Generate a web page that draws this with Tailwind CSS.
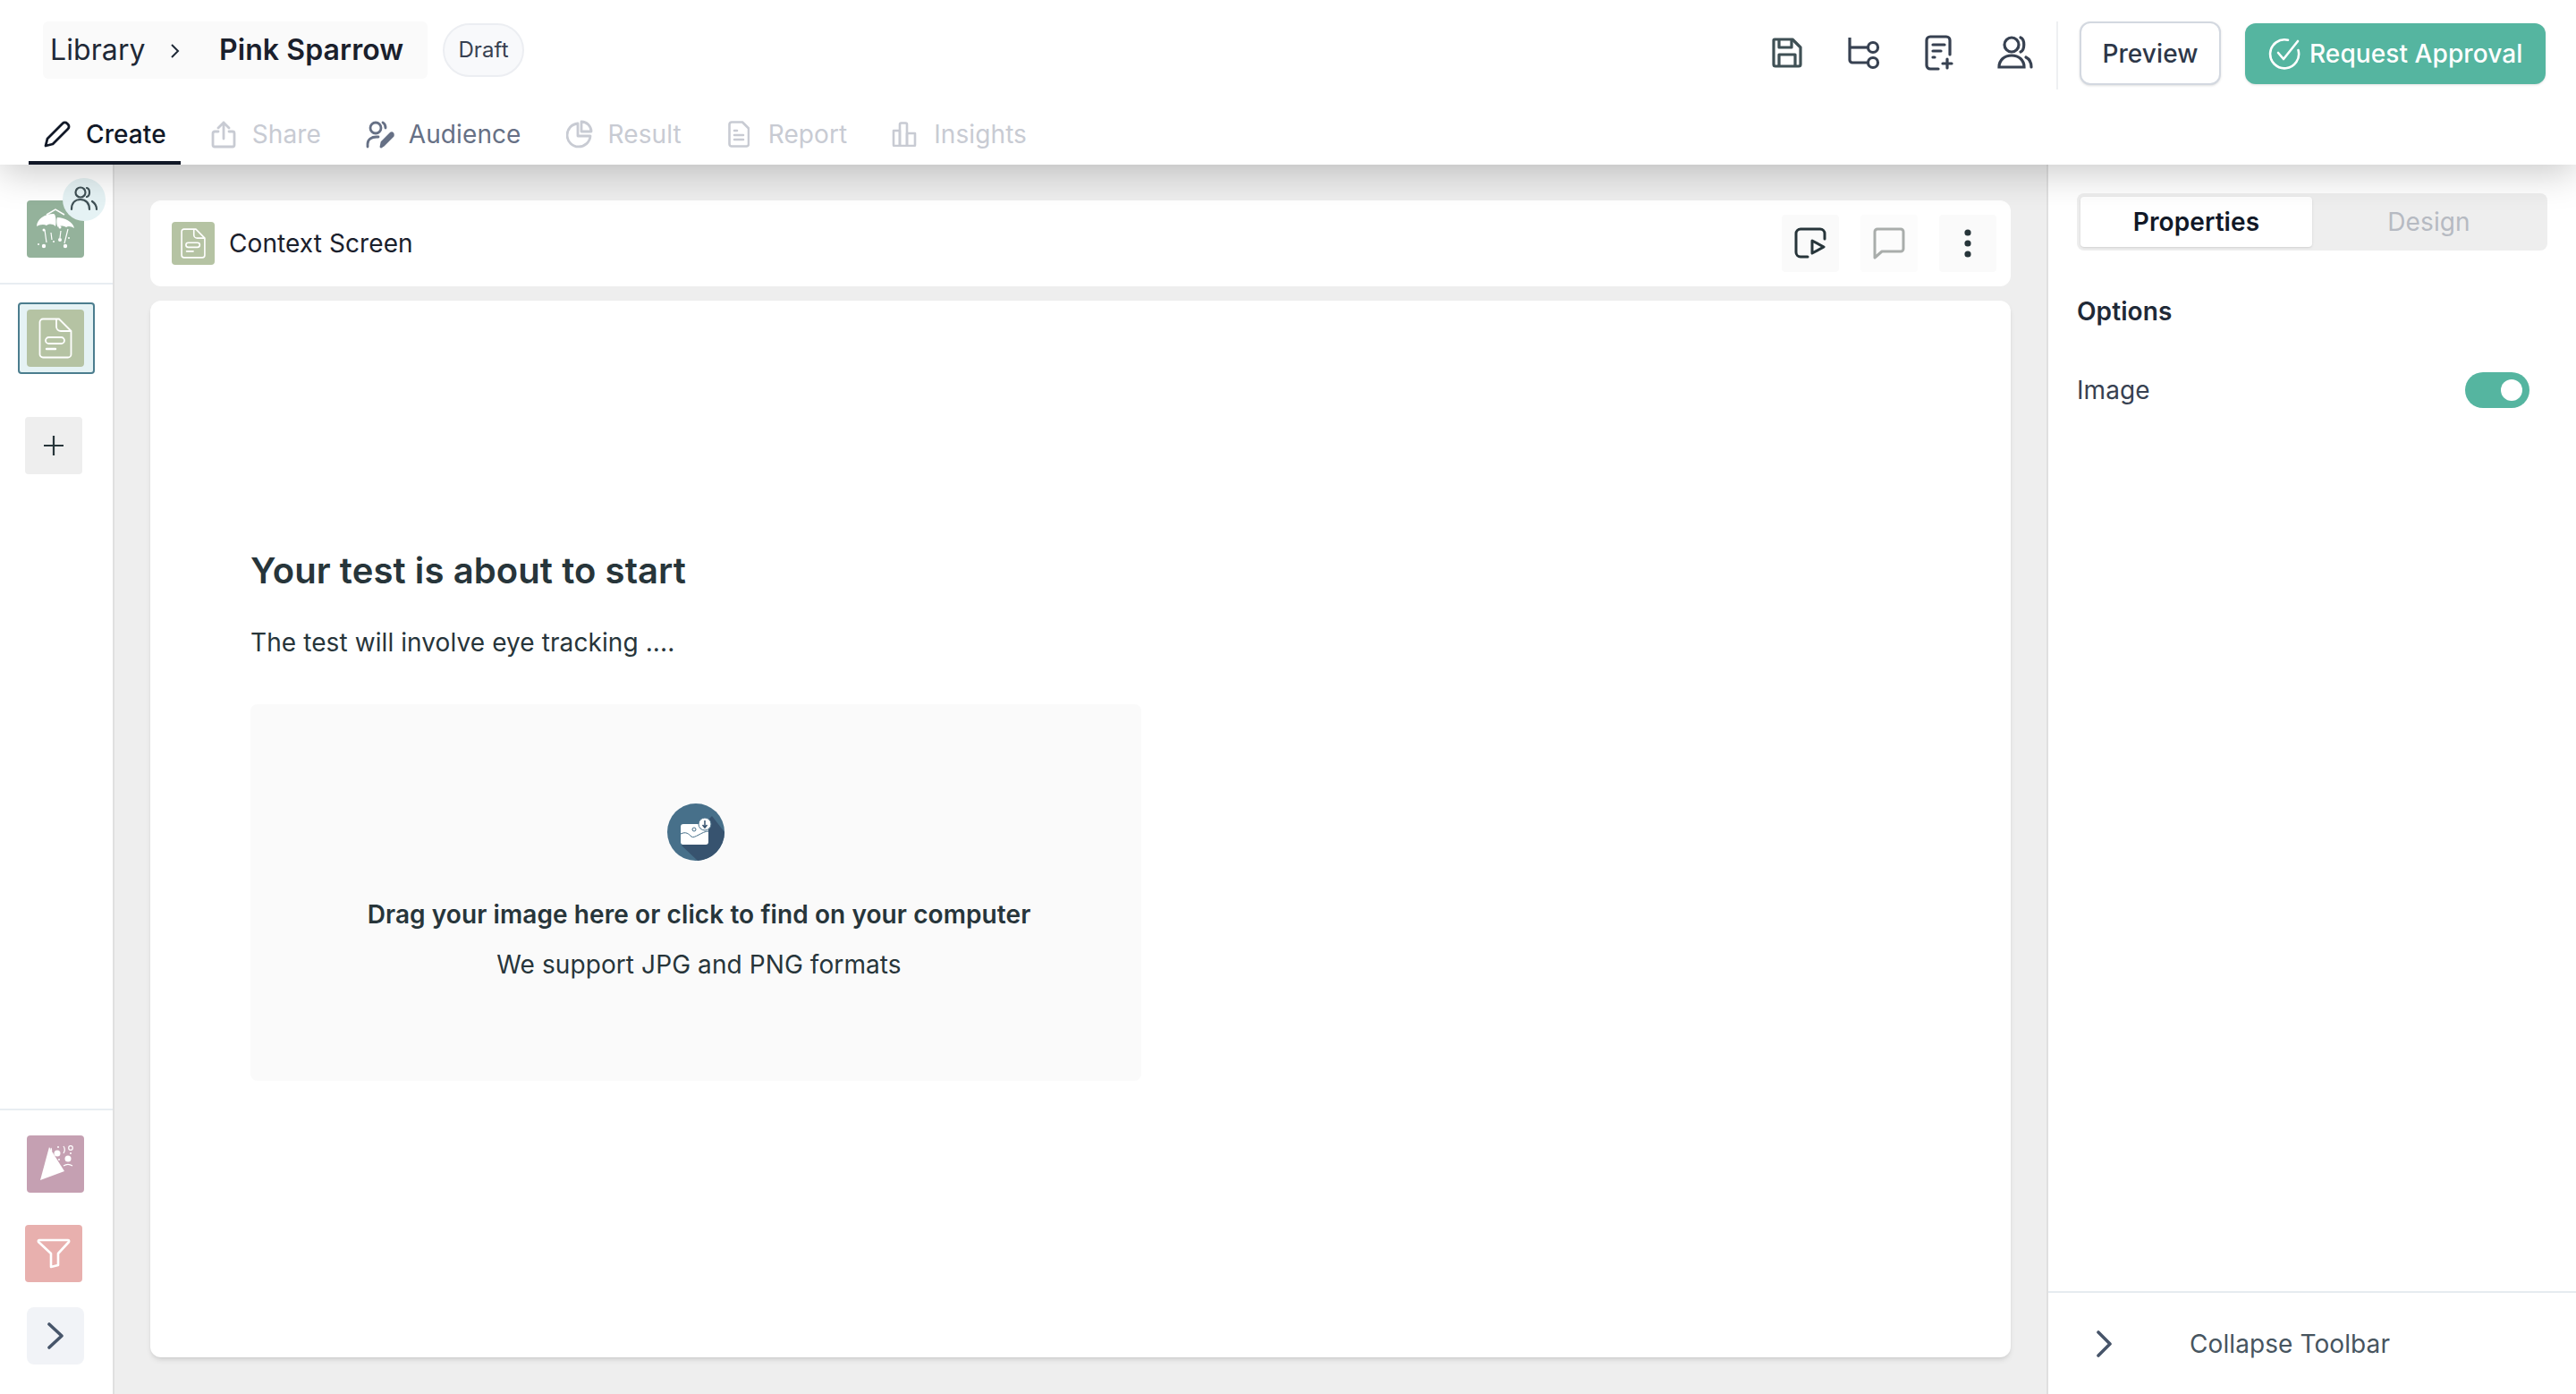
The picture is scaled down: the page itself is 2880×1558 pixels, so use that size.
<!DOCTYPE html>
<html>
<head>
<meta charset="utf-8">
<script src="https://cdn.jsdelivr.net/npm/@tailwindcss/browser@4"></script>
</head>
<body class="m-0">
<div class="w-[2880px] h-[1558px] flex flex-col overflow-hidden bg-[#eeeeee] font-['Inter',sans-serif] tracking-[0.09px]">
  <!-- Header -->
  <header class="relative z-10 h-[184px] shrink-0 bg-white flex flex-col justify-between shadow-[0_8px_40px_rgba(0,0,0,0.22)]">
    <div class="flex justify-between pl-[48px] pr-[34px] pt-[24px]">
      <div class="flex items-start">
        <div class="w-[430px] h-[64px] bg-[#fafafa] rounded-[6px] flex items-center pl-[8px]">
          <span class="text-[32px] leading-none text-[#1f2937] w-[126px]">Library</span>
          <svg class="w-[24px] h-[24px] mt-[2px] ml-[2px]" viewBox="0 0 24 24" fill="none" stroke="#1f2937" stroke-width="2"><path d="M8 5l7 7-7 7"/></svg>
          <span class="ml-[37px] text-[32px] leading-none font-semibold text-[#1a202c]">Pink Sparrow</span>
        </div>
        <div class="ml-[17px] mt-[2px] w-[91px] h-[60px] rounded-full bg-[#f8f9fb] border-2 border-[#eceef2] flex items-center justify-center text-[24px] text-[#374151]">Draft</div>
      </div>
      <div class="flex items-start">
        <div class="flex gap-[37px] mt-[11px] text-[#3f5055]">
          <svg class="w-[48px] h-[48px]" viewBox="0 0 48 48" fill="none" stroke="#3f5055" stroke-width="3.2" stroke-linejoin="round"><path d="M10 9h20l9 9v19a2 2 0 0 1-2 2H11a2 2 0 0 1-2-2V10a1 1 0 0 1 1-1z"/><path d="M15 9v9h14V9"/><path d="M15 39V26h18v13"/></svg>
          <svg class="w-[48px] h-[48px]" viewBox="0 0 48 48" fill="none" stroke="#374151" stroke-width="3.200"><path d="M9 7v25a3 3 0 0 0 3 3h18"/><path d="M9 18h21"/><circle cx="35" cy="18" r="5.5"/><circle cx="35" cy="35" r="5.5"/></svg>
          <svg class="w-[48px] h-[48px]" viewBox="0 0 48 48" fill="none" stroke="#374151" stroke-width="3.200" stroke-linecap="round"><path d="M23 42h-9a4 4 0 0 1-4-4V10a4 4 0 0 1 4-4h18a4 4 0 0 1 4 4v16"/><path d="M17 15h13M17 22h9M17 29h2"/><path d="M33 31v10M28 36h10"/></svg>
          <svg class="w-[48px] h-[48px]" viewBox="0 0 48 48" fill="none" stroke="#374151" stroke-width="3.200" stroke-linecap="round"><circle cx="20" cy="15" r="8"/><path d="M6 40c0-8 6-13 14-13s14 5 14 13z"/><path d="M30 7c5 2 5 14 0 16M36 29c4 2 6 6 6 11"/></svg>
        </div>
        <div class="ml-[22px] w-[2px] h-[76px] bg-[#eef0f2]"></div>
        <button class="ml-[24px] w-[158px] h-[71px] rounded-[12px] bg-white border-2 border-[#d3d8e0] shadow-sm text-[28px] font-medium text-[#2d3748]">Preview</button>
        <button class="ml-[27px] mt-[2px] w-[336px] h-[68px] rounded-[12px] bg-[#55b5a0] shadow-sm flex items-center pl-[26px] gap-[10px] text-[28px] font-medium text-white whitespace-nowrap">
          <svg class="w-[36px] h-[36px] shrink-0" viewBox="0 0 36 36" fill="none" stroke="#fff" stroke-width="2.6" stroke-linecap="round" stroke-linejoin="round"><path d="M22 2.8A16 16 0 1 0 33.5 14"/><path d="M11 17l6 7L33 4"/></svg>
          Request Approval
        </button>
      </div>
    </div>
    <nav class="flex pl-[32px] gap-[16px] text-[28px] leading-none">
      <div class="h-[66px] pt-[2px] pl-[16px] pr-[16px] flex items-center gap-[16px] border-b-4 border-[#111827] font-medium text-[#111827]">
        <svg class="w-[32px] h-[32px]" viewBox="0 0 32 32" fill="none" stroke="#111827" stroke-width="2.8" stroke-linejoin="round"><path d="M3 29l2-8L22 4a3.5 3.5 0 0 1 5 0l1 1a3.5 3.5 0 0 1 0 5L11 27z"/></svg>
        Create
      </div>
      <div class="h-[66px] pt-[2px] pl-[18px] pr-[16px] flex items-center gap-[18px] text-[#c8cbd3] border-b-4 border-transparent">
        <svg class="w-[28px] h-[32px]" viewBox="0 0 28 32" fill="none" stroke="#c8cbd3" stroke-width="2.8" stroke-linecap="round" stroke-linejoin="round"><path d="M8 13H4a2 2 0 0 0-2 2v13a2 2 0 0 0 2 2h20a2 2 0 0 0 2-2V15a2 2 0 0 0-2-2h-4"/><path d="M14 21V3M8 9l6-6 6 6"/></svg>
        Share
      </div>
      <div class="h-[66px] pt-[2px] pl-[18px] pr-[16px] flex items-center gap-[16px] text-[#667085] border-b-4 border-transparent">
        <svg class="w-[32px] h-[32px]" viewBox="0 0 32 32" fill="none" stroke="#667085" stroke-width="2.8" stroke-linecap="round" stroke-linejoin="round"><circle cx="11" cy="9" r="6"/><path d="M2 30v-3c0-5 4-8 10-8h2"/><path d="M19 3c2 1 3 3 3 6"/><path d="M17 30l1-5 10-10c1.500-1 3 1 2 3L20 28z" fill="#667085"/></svg>
        Audience
      </div>
      <div class="h-[66px] pt-[2px] pl-[18px] pr-[16px] flex items-center gap-[17px] text-[#c8cbd3] border-b-4 border-transparent">
        <svg class="w-[30px] h-[32px]" viewBox="0 0 30 32" fill="none" stroke="#c8cbd3" stroke-width="2.8" stroke-linejoin="round"><path d="M13 4a13 13 0 1 0 14 14H13z"/><path d="M17 2a11 11 0 0 1 11 11H17z"/></svg>
        Result
      </div>
      <div class="h-[66px] pt-[2px] pl-[20px] pr-[16px] flex items-center gap-[21px] text-[#c8cbd3] border-b-4 border-transparent">
        <svg class="w-[24px] h-[30px]" viewBox="0 0 24 30" fill="none" stroke="#c8cbd3" stroke-width="2.6" stroke-linecap="round" stroke-linejoin="round"><path d="M4 1.500h12l7 7V26a2.500 2.500 0 0 1-2.500 2.500H4A2.500 2.500 0 0 1 1.500 26V4A2.500 2.500 0 0 1 4 1.500z"/><path d="M7 11h3M7 16h10M7 21h10"/></svg>
        Report
      </div>
      <div class="h-[66px] pt-[2px] pl-[18px] pr-[16px] flex items-center gap-[19px] text-[#c8cbd3] border-b-4 border-transparent">
        <svg class="w-[28px] h-[28px]" viewBox="0 0 28 28" fill="none" stroke="#c8cbd3" stroke-width="2.6" stroke-linejoin="round"><path d="M2 10h7v17H3a1 1 0 0 1-1-1z"/><path d="M9 3a1.500 1.500 0 0 1 1.500-1.500h5A1.500 1.500 0 0 1 17 3v24H9z"/><path d="M17 13h9v13a1 1 0 0 1-1 1h-8z"/></svg>
        Insights
      </div>
    </nav>
  </header>

  <div class="flex-1 flex min-h-0">
    <!-- Left sidebar -->
    <aside class="w-[128px] shrink-0 bg-white border-r-2 border-[#e0e0e0] flex flex-col">
      <div class="h-[134px] border-b-2 border-[#e8edf2] pl-[30px] pt-[40px] relative shrink-0">
        <div class="w-[64px] h-[64px] rounded-[4px] bg-[#94b29b]">
          <svg class="w-[64px] h-[64px]" viewBox="0 0 64 64" fill="#fff"><path d="M11 29c0-8 9-14 19-14 3 0 3 12 2 14-3-3-7-3-10-1-3-2-8-1-11 1z"/><path d="M34 19c8 0 18 5 19 12-3-2-7-3-9-1-3-2-7-2-9 0-2-2-2-9-1-11z"/><path d="M22 16l10-6 10 6" fill="none" stroke="#fff" stroke-width="1.500"/><path d="M20 33l2 14M46 32l-4 16M27 36l1 8M38 34l-1 8" fill="none" stroke="#fff" stroke-width="1.200"/><circle cx="19" cy="33" r="1.500"/><circle cx="37" cy="44" r="2"/><circle cx="19" cy="51" r="2.200"/><circle cx="43" cy="51" r="2.200"/><circle cx="13" cy="49" r="1"/><circle cx="30" cy="46" r="1"/><circle cx="47" cy="42" r="1"/><circle cx="37" cy="30" r="1.500"/></svg>
        </div>
        <div class="absolute left-[70px] top-[15px] w-[48px] h-[48px] rounded-full bg-[#e5f2f4] flex items-center justify-center">
          <svg class="w-[34px] h-[34px]" viewBox="0 0 34 34" fill="none" stroke="#3f5055" stroke-width="2.200" stroke-linecap="round"><circle cx="13" cy="9" r="5.500"/><path d="M3 28c0-7 4-11 10-11s10 4 10 11"/><path d="M20 4c4 1 4 9 0 10M26 19c3 2 5 5 5 9"/></svg>
        </div>
      </div>
      <div class="ml-[20px] mt-[20px] w-[86px] h-[80px] rounded-[4px] bg-[#e5f2f4] border-2 border-[#4b7d8e] pl-[8px] pt-[6px]">
        <div class="w-[64px] h-[64px] rounded-[4px] bg-[#b5c3a3] flex items-center justify-center">
          <svg class="w-[38px] h-[46px]" viewBox="0 0 38 46" fill="none" stroke="#fff" stroke-width="1.800" stroke-linejoin="round"><path d="M5 1.500h18L36.500 15v26a3.500 3.500 0 0 1-3.500 3.500H5A3.500 3.500 0 0 1 1.500 41V5A3.500 3.500 0 0 1 5 1.500z"/><path d="M20 1.500V10a5 5 0 0 0 5 5h11.500"/><rect x="8" y="22" width="21" height="7" rx="3.500"/><path d="M9 35h10" stroke-width="2.400" stroke-linecap="round"/></svg>
        </div>
      </div>
      <div class="ml-[28px] mt-[48px] w-[64px] h-[64px] rounded-[4px] bg-[#eeeeee] flex items-center justify-center">
        <svg class="w-[24px] h-[24px]" viewBox="0 0 24 24" fill="none" stroke="#27353a" stroke-width="2.200"><path d="M12 1v22M1 12h22"/></svg>
      </div>
      <div class="mt-auto h-[319px] border-t-2 border-[#e8edf2] shrink-0 relative">
        <div class="ml-[30px] mt-[28px] w-[64px] h-[64px] rounded-[4px] bg-[#c5a0b2]">
          <svg class="w-[64px] h-[64px]" viewBox="0 0 64 64" fill="#fff"><path d="M15 50l10-37 17 27z"/><circle cx="34" cy="20" r="3.500"/><circle cx="46" cy="26" r="3.500"/><path d="M27 14c1 2 1 3 0 5M41 12c2 3 2 5 0 8M41 34c3-2 7-2 10 0" fill="none" stroke="#fff" stroke-width="1.200"/><circle cx="49" cy="14" r="2.300" fill="none" stroke="#fff" stroke-width="1.200"/><circle cx="35" cy="13" r="1"/><circle cx="36" cy="27" r="1"/><circle cx="49" cy="20" r="1"/></svg>
        </div>
        <div class="ml-[28px] mt-[36px] w-[64px] h-[64px] rounded-[4px] bg-[#e8b0ae] flex items-center justify-center">
          <svg class="w-[38px] h-[34px]" viewBox="0 0 38 34" fill="none" stroke="#fff" stroke-width="2.600" stroke-linejoin="round"><path d="M3 2h32c1 0 1.500 1 1 2L24 17v13l-8 2V17L2 4C1.500 3 2 2 3 2z"/></svg>
        </div>
        <div class="ml-[30px] mt-[28px] w-[64px] h-[64px] rounded-[8px] bg-[#f1f3f7] flex items-center justify-center">
          <svg class="w-[20px] h-[30px]" viewBox="0 0 20 30" fill="none" stroke="#47556a" stroke-width="3.600" stroke-linecap="round" stroke-linejoin="round"><path d="M3 2l14 13L3 28"/></svg>
        </div>
      </div>
    </aside>

    <!-- Main -->
    <main class="flex-1 px-[40px] pt-[40px] pb-[41px] flex flex-col gap-[16px] min-w-0">
      <div class="h-[96px] shrink-0 bg-white rounded-[12px] flex items-center pl-[24px] pr-[16px]">
        <div class="w-[48px] h-[48px] rounded-[4px] bg-[#b5c3a3] flex items-center justify-center">
          <svg class="w-[28px] h-[34px]" viewBox="0 0 38 46" fill="none" stroke="#fff" stroke-width="2.200" stroke-linejoin="round"><path d="M5 1.500h18L36.500 15v26a3.500 3.500 0 0 1-3.500 3.500H5A3.500 3.500 0 0 1 1.500 41V5A3.500 3.500 0 0 1 5 1.500z"/><path d="M20 1.500V10a5 5 0 0 0 5 5h11.500"/><rect x="8" y="22" width="21" height="7" rx="3.500"/><path d="M9 35h10" stroke-width="2.400" stroke-linecap="round"/></svg>
        </div>
        <span class="ml-[16px] text-[28px] text-[#1a202c]">Context Screen</span>
        <div class="ml-auto flex gap-[24px]">
          <div class="w-[64px] h-[64px] rounded-[4px] bg-[#fafafa] flex items-center justify-center">
            <svg class="w-[36px] h-[36px]" viewBox="0 0 36 36" fill="none" stroke="#27353a" stroke-width="3" stroke-linecap="round" stroke-linejoin="round"><path d="M15 33H7a5 5 0 0 1-5-5V7a5 5 0 0 1 5-5h22a5 5 0 0 1 5 5v6"/><path d="M20 15l13 7-13 7z"/></svg>
          </div>
          <div class="w-[64px] h-[64px] rounded-[4px] bg-[#fcfcfc] flex items-center justify-center">
            <svg class="w-[36px] h-[36px]" viewBox="0 0 36 36" fill="none" stroke="#a9adab" stroke-width="3" stroke-linejoin="round"><path d="M5 2h26a3 3 0 0 1 3 3v19a3 3 0 0 1-3 3H10l-8 7V5a3 3 0 0 1 3-3z"/></svg>
          </div>
          <div class="w-[64px] h-[64px] rounded-[4px] bg-[#fafafa] flex items-center justify-center">
            <svg class="w-[8px] h-[32px]" viewBox="0 0 8 32" fill="#27353a"><circle cx="4" cy="4" r="3.600"/><circle cx="4" cy="16" r="3.600"/><circle cx="4" cy="28" r="3.600"/></svg>
          </div>
        </div>
      </div>
      <div class="flex-1 bg-white rounded-[12px] shadow-md pl-[112px] pt-[278px]">
        <h1 class="text-[40px] leading-[48px] font-semibold text-[#27353a]">Your test is about to start</h1>
        <p class="mt-[36px] text-[28px] leading-[40px] text-[#27353a]">The test will involve eye tracking ....</p>
        <div class="mt-[49px] w-[996px] h-[421px] bg-[#fafafa] rounded-[8px] flex flex-col items-center pt-[111px]">
          <svg class="w-[64px] h-[64px]" viewBox="0 0 64 64"><circle cx="32" cy="32" r="32" fill="#47708a"/><path d="M16 47L50 14 64 32A32 32 0 0 1 34 64z" fill="#37536f"/><rect x="15" y="23" width="31" height="23" rx="3" fill="#fff"/><path d="M15 34c6-3 9 0 12 3s12-6 19-6" fill="none" stroke="#47708a" stroke-width="1"/><circle cx="30" cy="29" r="2" fill="none" stroke="#47708a" stroke-width="1"/><circle cx="42" cy="23" r="7" fill="#fff" stroke="#47708a" stroke-width="1"/><path d="M42 19v7M39.500 24l2.500 3 2.500-3" fill="none" stroke="#37536f" stroke-width="1.500"/></svg>
          <p class="mt-[40px] pl-[7px] text-[28px] leading-[40px] font-semibold text-[#27353a]">Drag your image here or click to find on your computer</p>
          <p class="mt-[16px] pl-[7px] text-[28px] leading-[40px] text-[#27353a]">We support JPG and PNG formats</p>
        </div>
      </div>
    </main>

    <!-- Right panel -->
    <aside class="w-[592px] shrink-0 bg-white border-l-2 border-[#e0e0e0] flex flex-col">
      <div class="flex-1 pl-[32px] pr-[32px] pt-[32px]">
        <div class="h-[64px] rounded-[8px] bg-[#eeeeee] flex items-center pl-[4px] text-[28px]">
          <div class="w-[259px] h-[56px] rounded-[4px] bg-white shadow-sm flex items-center justify-center font-semibold text-[#111827]">Properties</div>
          <div class="flex-1 text-center pr-[2px] text-[#b6bac2]">Design</div>
        </div>
        <h2 class="mt-[48px] text-[28px] leading-[40px] font-semibold text-[#1f2937]">Options</h2>
        <div class="mt-[48px] h-[40px] flex items-center justify-between pr-[20px]">
          <span class="text-[28px] text-[#374151]">Image</span>
          <div class="w-[72px] h-[40px] rounded-full bg-[#55b5a0] flex items-center justify-end pr-[8px]">
            <div class="w-[24px] h-[24px] rounded-full bg-white"></div>
          </div>
        </div>
      </div>
      <div class="h-[115px] shrink-0 border-t-2 border-[#e6ebf0] flex items-center pl-[54px]">
        <svg class="w-[18px] h-[30px]" viewBox="0 0 18 30" fill="none" stroke="#47556a" stroke-width="3.600" stroke-linecap="round" stroke-linejoin="round"><path d="M2 2l13 13L2 28"/></svg>
        <span class="ml-[86px] text-[28px] text-[#47555f]">Collapse Toolbar</span>
      </div>
    </aside>
  </div>
</div>
</body>
</html>
